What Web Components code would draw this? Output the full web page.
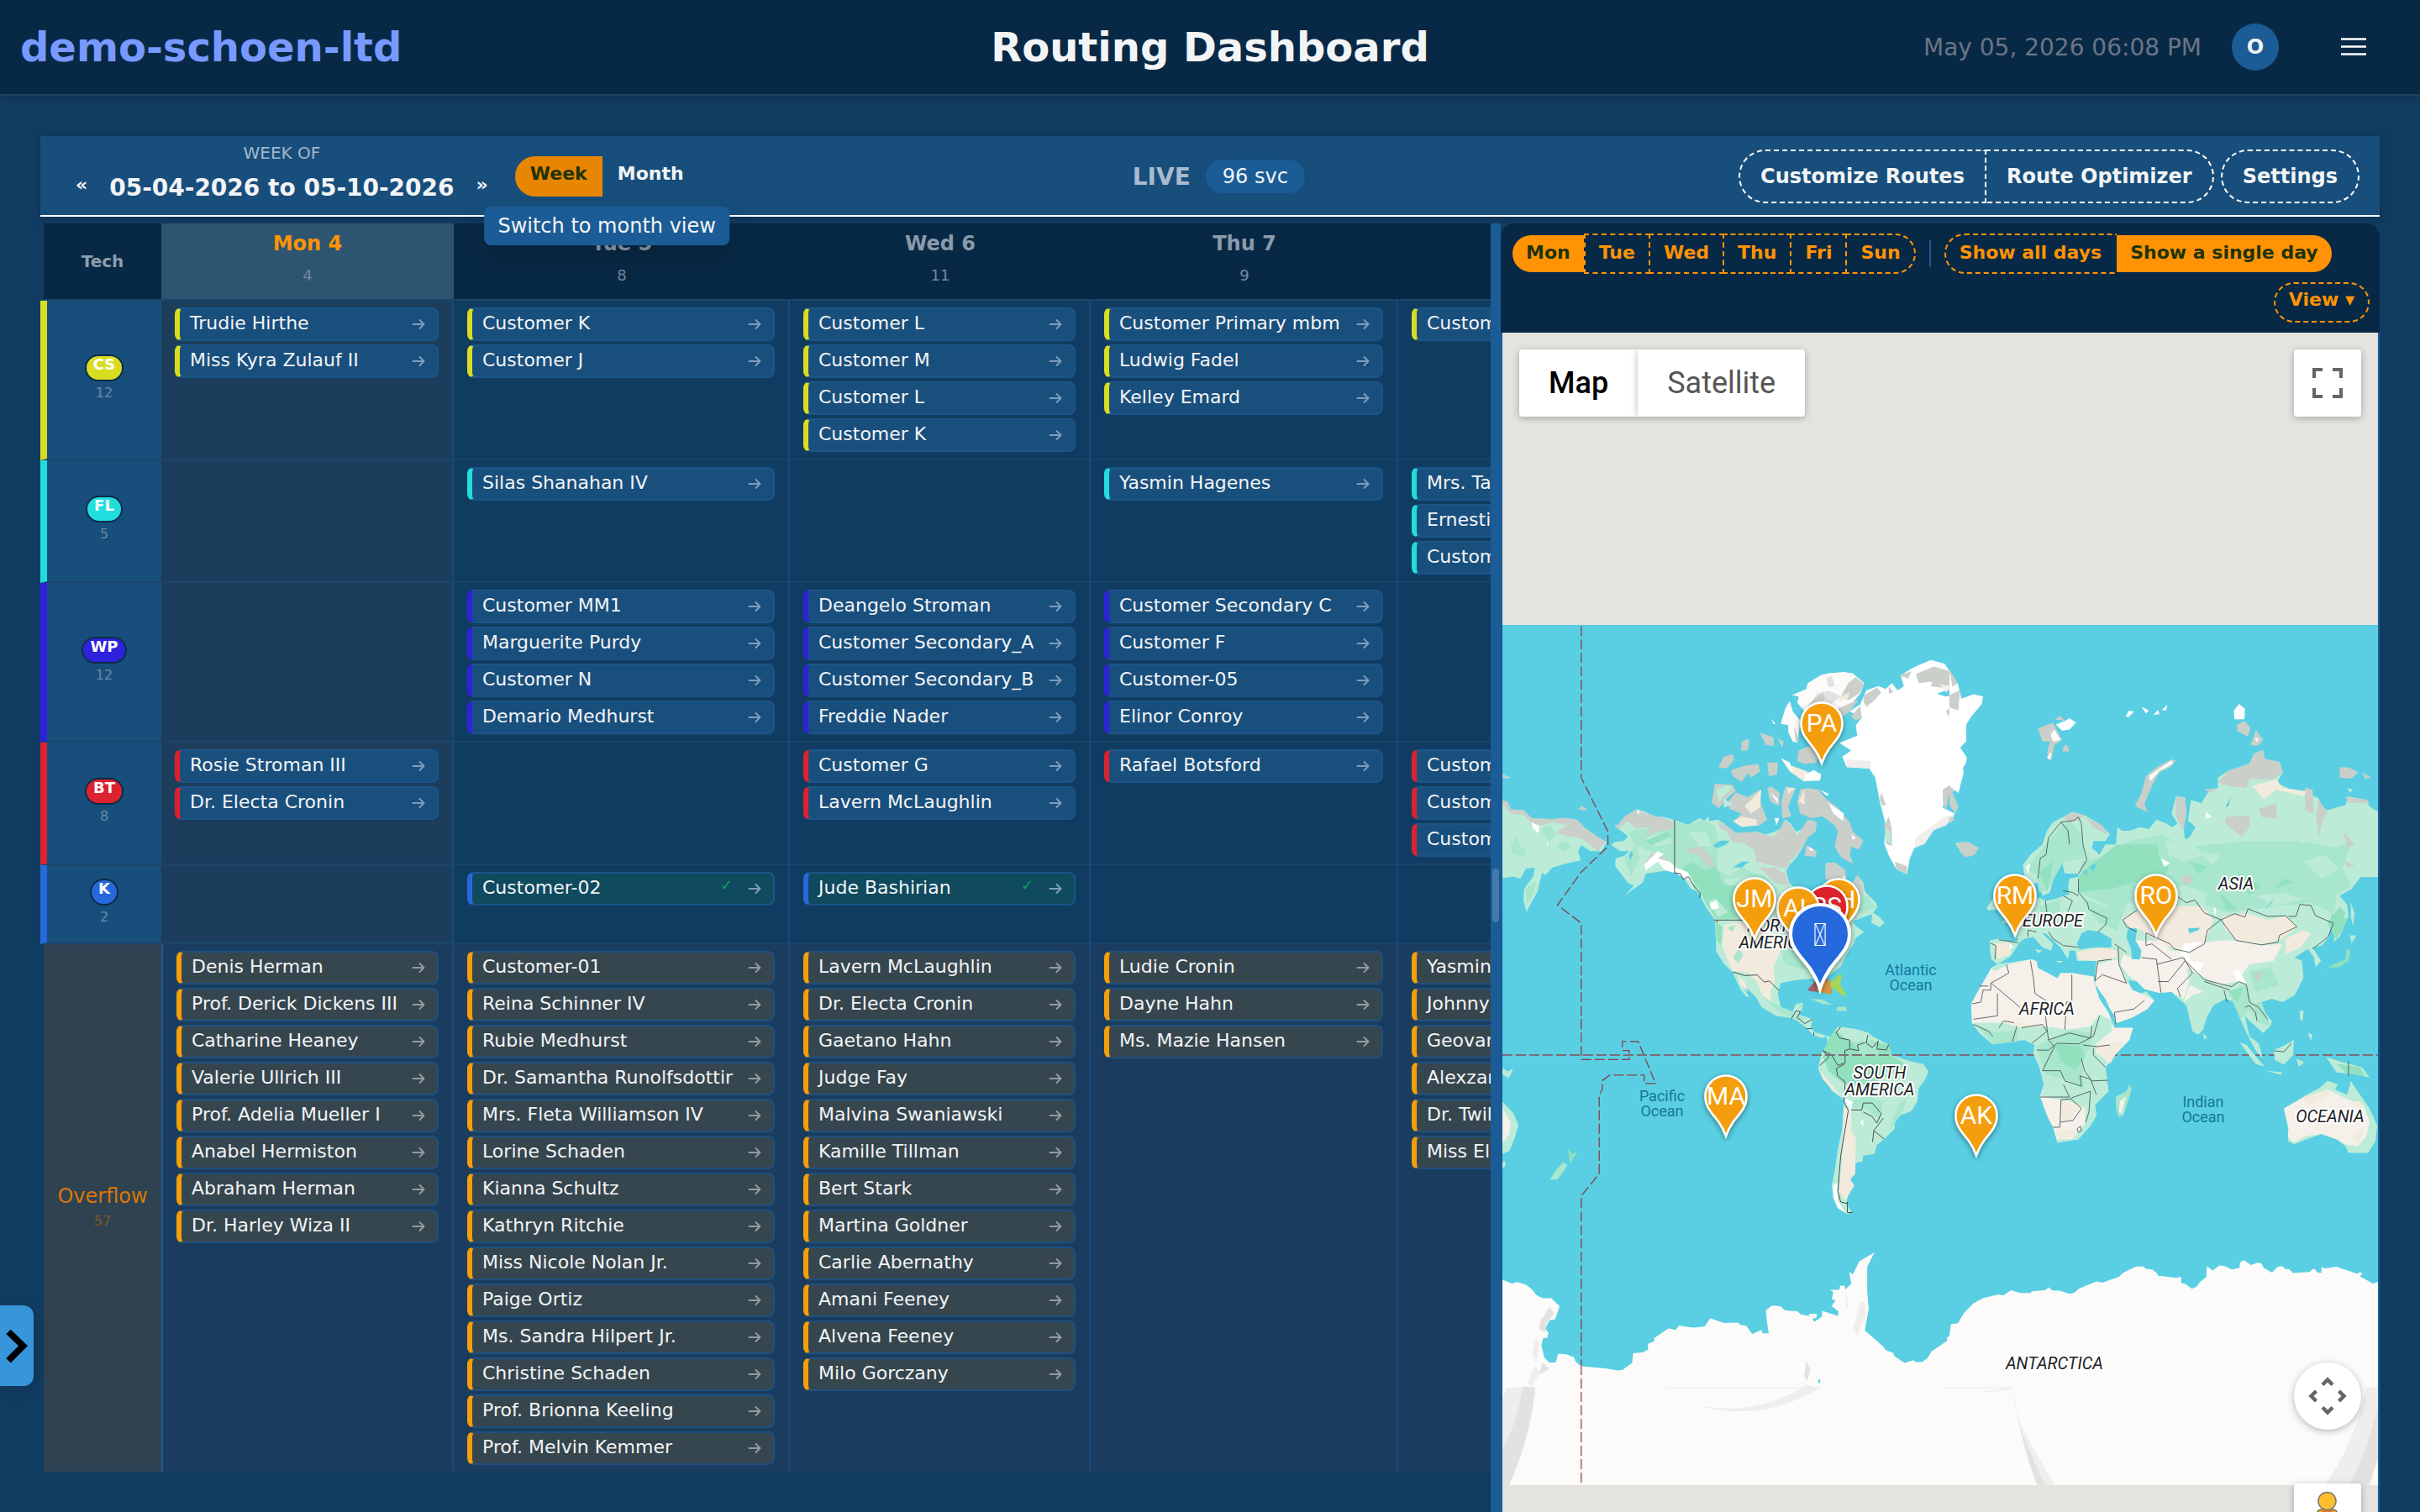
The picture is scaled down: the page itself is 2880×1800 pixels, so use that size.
<!DOCTYPE html>
<html lang="en">
<head>
<meta charset="utf-8">
<title>Routing Dashboard</title>
<style>
  html, body { margin: 0; height: 100%; }
  body {
    --ink: #f3f4f6; --deep: #082945; --base: #113c61; --panel: #184e7c; --line: #1b5c96; --accent: #ff9305;
    display: flex; flex-direction: column; overflow: hidden;
    background: var(--base); color: var(--ink);
    font-family: "DejaVu Sans", sans-serif; font-size: 22px;
  }
</style>
</head>
<body>
<app-header></app-header>
<main-view></main-view>
<drawer-toggle></drawer-toggle>

<script>
const define = (name, html, setup) => {
  const template = document.createElement('template');
  template.innerHTML = '<style>*{box-sizing:border-box} button{font:inherit;color:inherit;background:none;border:0;margin:0;padding:0;cursor:pointer}</style>' + html;
  customElements.define(name, class extends HTMLElement {
    constructor() {
      super();
      this.attachShadow({ mode: 'open' }).append(template.content.cloneNode(true));
    }
    connectedCallback() { if (setup) setup(this, this.shadowRoot); }
  });
};

/* One customer visit inside a grid cell */
define('job-chip', `
<style>
  :host {
    display: flex; align-items: center; box-sizing: border-box; height: 40px; margin-bottom: 4px; padding: 0 14px 0 12px;
    border: 2px solid #1b5589; border-left: 6px solid var(--tech); border-radius: 8px;
    background: #194f7d; color: var(--ink); font-size: 22px; white-space: nowrap;
  }
  :host([kind=done]) { background: #0f4a5f; }
  :host([kind=overflow]) { background: #36464e; border-color: #1f5080; border-left-color: #f59e0b; }
  .name { flex: 1; line-height: 30px; padding-bottom: 2px; }
  .check { display: none; color: #10a065; font-size: 18px; line-height: 24px; padding-bottom: 8px; margin-right: 18px; }
  :host([kind=done]) .check { display: block; }
  svg { flex: none; fill: none; stroke: #7f9db8; stroke-width: 2; stroke-linecap: round; stroke-linejoin: round; }
  :host([kind=overflow]) svg { stroke: #929c9f; }
</style>
<span class="name"><slot></slot></span><span class="check">✓</span><svg width="16" height="14"><path d="M1.500 7H14.500M9.500 2L14.500 7 9.500 12"/></svg>`);

/* Technician initials with the number of visits under them */
define('tech-badge', `
<style>
  :host { display: flex; flex-direction: column; align-items: center; gap: 4px; font-weight: 400; }
  .pill {
    height: 32px; padding: 0 8px; border: 2px solid #0b2c47; border-radius: 16px; background: var(--tech);
    color: #fff; font-weight: 700; font-size: 18px; line-height: 20px;
  }
  .count { font-size: 16px; line-height: 20px; padding-bottom: 4px; color: #6d8ba6; }
</style>
<span class="pill"><slot></slot></span><span class="count"><slot name="count"></slot></span>`);

define('app-header', `
<style>
  :host {
    display: grid; grid-template-columns: 1fr auto 1fr; align-items: center; height: 114px; flex: none; box-sizing: border-box;
    padding: 0 64px 0 24px; background: var(--deep); border-bottom: 2px solid #22415a; box-shadow: 0 2px 8px rgba(0,0,0,.18);
  }
  a { color: #7899ff; font-size: 48px; line-height: 56px; font-weight: 700; text-decoration: none; }
  h1 { margin: 0 -20px 0 20px; font-size: 48px; line-height: 56px; }
  .right { display: flex; justify-content: flex-end; align-items: center; }
  time { color: #6b7585; font-size: 28px; }
  .avatar { width: 56px; height: 56px; margin: 0 74px 0 36px; border-radius: 50%; background: var(--line); font-weight: 700; font-size: 24px; }
  .menu { display: flex; }
</style>
<a href="#">demo-schoen-ltd</a>
<h1>Routing Dashboard</h1>
<div class="right">
  <time>May 05, 2026 06:08 PM</time>
  <button class="avatar">O</button>
  <button class="menu" aria-label="Menu"><svg width="30" height="22"><path d="M0 1.5h30M0 10.5h30M0 19.5h30" stroke="#fff" stroke-width="2.6"/></svg></button>
</div>`);

define('week-toolbar', `
<style>
  :host {
    display: flex; justify-content: space-between; align-items: center; height: 96px; flex: none; box-sizing: border-box; padding: 2px 24px 0;
    background: var(--panel); border-bottom: 2px solid #fff; box-shadow: 0 2px 10px rgba(0,0,0,.2);
    position: relative; z-index: 2;
  }
  .week, .range, .switch, .live, .actions, .group { display: flex; align-items: center; }
  .week { gap: 14px; }
  .picker { display: flex; flex-direction: column; gap: 2px; }
  .label { text-align: center; font-size: 20px; line-height: 24px; color: #a3b8cb; }
  .range { gap: 8px; height: 54px; font-size: 28px; font-weight: 700; }
  .range button { padding: 0 18px 8px; font-size: 22px; }
  .switch { position: relative; font-weight: 700; }
  .switch button { height: 48px; padding: 0 18px 8px; }
  .switch button.on { background: #e88501; color: #1f3305; border-radius: 24px 0 0 24px; }
  .tip {
    position: absolute; left: 50%; top: 60px; transform: translateX(-50%); padding: 0 16px; border-radius: 8px;
    background: var(--line); font-size: 24px; line-height: 46px; font-weight: 400; white-space: nowrap; box-shadow: 0 16px 32px rgba(0,0,0,.16);
  }
  .live { gap: 18px; font-size: 28px; font-weight: 700; color: #a9bccd; }
  .svc { padding: 0 20px; border-radius: 20px; background: var(--line); color: var(--ink); font-size: 24px; font-weight: 400; line-height: 40px; }
  .actions { gap: 8px; font-size: 24px; font-weight: 700; }
  .actions button { height: 64px; padding: 0 24px; border: 2px dashed #fff; border-radius: 32px; }
  .actions .first { border-radius: 32px 0 0 32px; border-right: 0; }
  .actions .last { border-radius: 0 32px 32px 0; }
</style>
<div class="week">
  <div class="picker">
    <div class="label">WEEK OF</div>
    <div class="range"><button aria-label="Previous week">«</button><span>05-04-2026 to 05-10-2026</span><button aria-label="Next week">»</button></div>
  </div>
  <div class="switch"><button class="on">Week</button><button>Month</button><div class="tip" role="tooltip">Switch to month view</div></div>
</div>
<div class="live"><span>LIVE</span><span class="svc">96 svc</span></div>
<div class="actions">
  <div class="group"><button class="first">Customize Routes</button><button class="last">Route Optimizer</button></div>
  <button>Settings</button>
</div>`);

const days = [['Mon 4', 4], ['Tue 5', 8], ['Wed 6', 11], ['Thu 7', 9], ['Fri 8', 7]];
const rows = [
  ['CS', 12, '#d9dd22', [['Trudie Hirthe', 'Miss Kyra Zulauf II'], ['Customer K', 'Customer J'], ['Customer L', 'Customer M', 'Customer L', 'Customer K'], ['Customer Primary mbm', 'Ludwig Fadel', 'Kelley Emard'], ['Customer']]],
  ['FL', 5, '#22dddd', [[], ['Silas Shanahan IV'], [], ['Yasmin Hagenes'], ['Mrs. Tabitha', 'Ernestine', 'Customer']]],
  ['WP', 12, '#2f22dd', [[], ['Customer MM1', 'Marguerite Purdy', 'Customer N', 'Demario Medhurst'], ['Deangelo Stroman', 'Customer Secondary_A', 'Customer Secondary_B', 'Freddie Nader'], ['Customer Secondary C', 'Customer F', 'Customer-05', 'Elinor Conroy'], []]],
  ['BT', 8, '#dd222f', [['Rosie Stroman III', 'Dr. Electa Cronin'], [], ['Customer G', 'Lavern McLaughlin'], ['Rafael Botsford'], ['Customer', 'Customer', 'Customer']]],
  ['K', 2, '#2569dd', [[], ['Customer-02'], ['Jude Bashirian'], [], []]],
  ['Overflow', 57, '', [
    ['Denis Herman', 'Prof. Derick Dickens III', 'Catharine Heaney', 'Valerie Ullrich III', 'Prof. Adelia Mueller I', 'Anabel Hermiston', 'Abraham Herman', 'Dr. Harley Wiza II'],
    ['Customer-01', 'Reina Schinner IV', 'Rubie Medhurst', 'Dr. Samantha Runolfsdottir', 'Mrs. Fleta Williamson IV', 'Lorine Schaden', 'Kianna Schultz', 'Kathryn Ritchie', 'Miss Nicole Nolan Jr.', 'Paige Ortiz', 'Ms. Sandra Hilpert Jr.', 'Christine Schaden', 'Prof. Brionna Keeling', 'Prof. Melvin Kemmer'],
    ['Lavern McLaughlin', 'Dr. Electa Cronin', 'Gaetano Hahn', 'Judge Fay', 'Malvina Swaniawski', 'Kamille Tillman', 'Bert Stark', 'Martina Goldner', 'Carlie Abernathy', 'Amani Feeney', 'Alvena Feeney', 'Milo Gorczany'],
    ['Ludie Cronin', 'Dayne Hahn', 'Ms. Mazie Hansen'],
    ['Yasmin', 'Johnny', 'Geovanny', 'Alexzander', 'Dr. Twila', 'Miss Ella']]]
];

define('route-grid', `
<style>
  :host { display: block; overflow: hidden; }
  table { table-layout: fixed; width: 1976px; border-collapse: separate; border-spacing: 0; }
  th, td { padding: 0; vertical-align: top; }
  thead th { height: 92px; background: var(--deep); background-clip: padding-box; border-bottom: 2px solid #1b456b; color: #8b9bab; font-size: 24px; padding-top: 9px; line-height: 30px; }
  thead th.today { background: #2e5570; color: var(--accent); }
  thead .corner { font-size: 20px; vertical-align: middle; padding: 0; border-left: 4px solid transparent; color: #8f9eae; }
  thead small { display: block; margin-top: 11px; font-size: 18px; line-height: 24px; font-weight: 400; color: #7489a0; }
  tbody th { padding: 16px 0; vertical-align: middle; background: var(--panel); border-left: 8px solid var(--tech); border-bottom: 2px solid #1b456b; }
  td { padding: 8px 16px 4px; border-right: 2px solid #174a7a; border-bottom: 2px solid #1b456b; }
  td.today { background: #1c3e5c; border-right-color: #174a7a; }
  .over th { background: #2e4252; background-clip: padding-box; border-left: 4px solid transparent; border-right: 0; border-bottom: 0; font-weight: 400; font-size: 24px; line-height: 32px; color: #d97706; }
  .over small { display: block; font-size: 16px; line-height: 28px; color: #87551f; }
  .over td { background: #1a3d5f; border-bottom: 0; }
  .over td.today { border-left: 2px solid var(--line); }
</style>
<table>
  <colgroup><col style="width:144px"><col style="width:348px"><col style="width:400px"><col style="width:358px"><col style="width:366px"><col style="width:360px"></colgroup>
  <thead><tr><th class="corner">Tech</th></tr></thead>
  <tbody></tbody>
</table>`, (host, root) => {
  const today = i => i === 0 ? ' class="today"' : '';
  root.querySelector('thead tr').insertAdjacentHTML('beforeend', days.map(([d, n], i) => `<th${today(i)}>${d}<small>${n}</small></th>`).join(''));
  root.querySelector('tbody').innerHTML = rows.map(([tech, count, color, cells]) => {
    const over = tech === 'Overflow';
    const kind = over ? 'overflow' : tech === 'K' ? 'done' : 'job';
    const head = over ? `<th>${tech}<small>${count}</small></th>` : `<th><tech-badge>${tech}<span slot="count">${count}</span></tech-badge></th>`;
    return `<tr${over ? ' class="over"' : ''} style="--tech:${color}">${head}${cells.map((names, i) => `<td${today(i)}>${names.map(n => `<job-chip kind="${kind}">${n}</job-chip>`).join('')}</td>`).join('')}</tr>`;
  }).join('');
});

define('panel-splitter', `
<style>
  :host { display: flex; align-items: center; padding-left: 2px; box-sizing: border-box; width: 12px; flex: none; background: var(--line); }
  i { width: 8px; height: 64px; border-radius: 4px; background: #4678a9; }
</style><i></i>`);

const pin = (x, y, text, fill = '#f59e0b') =>
  `<g transform="translate(${x} ${y})"><path d="M0 -1.500C-2 -7 -4 -12 -9 -19C-17 -29 -24.500 -36 -24.500 -49A24.500 24.500 0 0 1 24.500 -49C24.500 -36 17 -29 9 -19C4 -12 2 -7 0 -1.500Z" fill="${fill}" stroke="#fff" stroke-width="2.500" filter="url(#drop)"/><text y="-38.500" font-size="30" fill="#fff" text-anchor="middle">${text}</text></g>`;
const land = (x, y, lines) => `<text class="land" text-anchor="middle">${lines.map((t, i) => `<tspan x="${x}" y="${y + i * 20}">${t}</tspan>`).join('')}</text>`;
const sea = (x, y, lines) => `<text class="sea" text-anchor="middle">${lines.map((t, i) => `<tspan x="${x}" y="${y + i * 18}">${t}</tspan>`).join('')}</text>`;

define('world-map', `
<style>
  :host { display: block; }
  svg { display: block; width: 100%; height: auto; font-family: Roboto, sans-serif; }
  .land { font-size: 20px; font-style: italic; fill: #202124; stroke: #fff; stroke-width: 4px; stroke-linejoin: round; paint-order: stroke; }
  .sea { font-size: 18px; fill: #14789a; }
  .g { fill: #bcecd8 } .m { fill: #a8e6cd } .d { fill: #91e1be } .b { fill: #f2ebdd } .s { fill: #f5f1ea }
  .r { fill: #cacfca } .w { fill: #fff } .o { fill: #5acfe3 } .q { fill: #efeeed } .t { fill: #e3e2e0 } .v { fill: #fcfbfa }
  .k { fill: none; stroke: #4a5052; stroke-width: 1; vector-effect: non-scaling-stroke; stroke-linejoin: round }
  .dash { fill: none; stroke: #7b6e78; stroke-width: 2; stroke-dasharray: 12 4; vector-effect: non-scaling-stroke }
  .line { stroke: #86404a; stroke-width: 1.300 }
</style>
<svg viewBox="1788 396 1042 1470" role="img" aria-label="World map">
<defs>
  <filter id="drop" x="-40%" y="-30%" width="180%" height="170%"><feDropShadow dx="0" dy="2" stdDeviation="3" flood-opacity=".45"/></filter>
</defs>
<rect x="1788" y="396" width="1042" height="1470" fill="#e4e3df"/>
<rect x="1788" y="744" width="1042" height="1024" class="o"/>

<!-- Americas and the Arctic -->
<g transform="translate(1780 740) scale(.357143)">
  <path class="g" d="M22 595L40 603 48 628 92 628 115 655 190 660 225 655 270 660 300 690 335 715 370 735 352 765 315 765 285 745 275 765 283 797 240 805 190 820 165 845 155 836 146 870 140 900 120 935 103 967 92 930 95 890 125 850 130 820 100 825 82 858 60 850 22 855Z"/>
  <path class="r" d="M22 595L40 600 50 625 95 630 120 655 190 658 225 654 270 660 300 690 365 735 340 765 315 745 290 725 260 718 225 712 200 703 240 680 190 668 155 680 120 672 95 645 50 640 22 605ZM275 625L285 615 304 624 295 630ZM22 508L50 520 35 524 22 518Z"/>
  <path class="m" d="M50 740L75 715 80 750 105 760 90 785 55 775ZM150 690L185 680 200 710 180 735 160 710ZM100 890L135 865 125 910 105 940ZM200 745L235 730 250 750 225 770Z"/>
  <path class="w" d="M118 668L145 682 143 705 125 690ZM170 740L175 735 174 750Z"/>
  <path class="g" d="M395 680L425 675 430 650 470 625 500 635 530 650 560 652 600 662 640 678 680 655 695 665 708 648 712 665 740 660 765 675 750 690 790 700 830 710 870 700 900 710 930 700 950 690 965 660 985 675 1000 700 1030 690 1040 660 1070 668 1065 700 1040 720 1025 750 1000 790 980 810 968 830 978 870 1000 890 1040 900 1060 930 1070 950 1090 950 1100 900 1110 870 1098 840 1100 805 1130 803 1160 825 1170 860 1190 870 1205 845 1225 870 1230 900 1265 935 1272 950 1255 975 1225 985 1190 1000 1200 1015 1228 1035 1200 1055 1190 1080 1170 1110 1150 1150 1110 1180 1060 1190 1000 1195 950 1205 940 1240 950 1285 990 1300 1000 1275 1025 1270 1020 1295 1010 1310 1055 1325 1050 1355 1065 1370 1085 1375 1103 1382 1090 1388 1060 1380 1030 1350 1000 1328 975 1320 935 1315 885 1285 870 1255 830 1215 800 1180 845 1252 835 1250 815 1225 790 1170 760 1140 735 1100 732 1010 728 990 705 960 683 920 682 905 650 890 630 860 600 838 570 830 535 835 500 840 490 870 455 895 430 915 460 880 440 870 425 850 398 815 400 790 430 780 445 765 415 765 385 745 395 735 430 730 440 715Z"/>
  <path class="m" d="M600 665L640 680 690 660 730 680 745 740 800 790 840 830 900 850 940 900 890 960 800 990 735 990 690 920 650 870 600 825 560 780 500 760 460 740 440 700 500 690ZM430 790L470 740 480 790 450 850ZM1180 920L1240 915 1265 950 1220 975 1190 960Z"/>
  <path class="g" d="M640 700L700 700 720 750 680 750ZM740 760L800 740 850 790 780 850 740 830ZM500 720L560 700 590 740 530 750ZM760 860L840 850 930 880 900 900 790 890Z"/>
  <path class="d" d="M610 835L650 800 700 830 735 815 760 880 800 880 830 900 790 960 800 990 735 990 700 940 680 890ZM735 1000L755 1020 750 1080 735 1060ZM500 730L570 700 590 715 520 745ZM800 870L870 880 860 900Z"/>
  <path class="g" d="M710 930L735 925 775 970 740 985Z"/>
  <path class="r" d="M400 685L430 650 470 625 500 640 560 655 594 668 590 690 540 700 500 715 515 685 470 690 440 665 410 690ZM740 665L770 680 800 705 870 700 925 720 950 690 960 662 985 680 1005 715 1040 660 1070 668 1065 700 1040 720 1025 750 1000 780 980 800 968 825 930 815 870 800 860 760 830 740 790 735 770 700 750 690ZM640 755L690 750 720 790 732 818 700 810 680 780 645 770ZM880 820L930 820 965 840 978 880 930 870ZM1100 805L1130 803 1165 830 1168 870 1100 862ZM1190 870L1205 845 1225 880 1225 920 1200 900ZM500 800L520 770 560 785 600 815 640 850 600 838 540 800 500 825Z"/>
  <path class="w" d="M495 810L540 765 560 775 540 790 580 800 600 820 640 835 665 880 640 860 600 838 565 830 540 800 500 830ZM712 940L735 930 745 955 720 960ZM470 632L480 628 476 645ZM1155 850L1167 850 1160 862Z"/>
  <path class="b" d="M762 1010L830 1000 870 1020 960 1050 945 1110 925 1150 930 1200 915 1235 918 1272 890 1250 870 1200 840 1170 790 1165 770 1120 755 1080ZM805 1180L830 1200 840 1235 815 1210Z"/>
  <path class="m" d="M950 1080L1080 1060 1160 1080 1150 1130 1110 1170 1020 1160 960 1140ZM880 1240L920 1270 985 1300 1040 1325 1010 1330 940 1300ZM1010 1275L1025 1272 1015 1292ZM790 1120L810 1090 825 1110 810 1140ZM770 1020L800 1010 790 1035Z"/>
  <path class="o" d="M725 745L750 730 780 730 765 745 735 755ZM790 820L820 800 845 800 820 820ZM1010 980L1050 985 1080 1010 1050 1020 1020 1005ZM452 765L458 775 448 795 444 780Z"/>
  <path class="r" d="M742 485L760 450 790 442 795 460 770 490ZM785 495L830 480 875 475 882 500 850 520 840 505 820 535 790 515ZM730 540L790 545 800 565 770 590 745 622 720 605ZM775 600L800 570 840 585 880 560 885 610 905 660 880 680 820 680 795 665 820 640 780 625ZM905 470L940 470 938 510 910 515ZM880 370L925 385 928 415 900 410ZM820 400L845 390 840 430 818 430ZM940 390L960 400 955 420ZM905 555L920 550 945 570 945 615 915 600ZM965 550L1000 555 985 590 975 620 985 650 955 655 952 600ZM1005 600L1015 560 1040 555 1075 560 1100 590 1140 620 1180 670 1190 700 1225 730 1210 760 1185 750 1180 780 1192 808 1150 785 1130 750 1140 700 1130 680 1090 650 1050 655 1015 640ZM1035 745L1070 765 1065 785 1030 780ZM1010 430L1080 400 1070 470 1030 475 1005 465Z"/>
  <path class="b" d="M790 665L820 650 870 660 870 680 820 685ZM830 615L885 560 880 620 850 640ZM980 500L950 455 985 480 1040 500 1030 535ZM970 555L998 555 975 575ZM1010 600L1028 560 1030 610Z"/>
  <path class="g" d="M735 560L770 545 790 555 760 580 745 600ZM760 590L790 610 760 620Z"/>
  <path class="w" d="M1030 510L1060 495 1085 510 1080 530 1030 532ZM950 455L980 470 990 500 970 480ZM915 570L940 590 940 605ZM1080 560L1110 575 1105 582ZM1110 605L1160 640 1158 665 1125 640ZM1185 710L1200 720 1190 728ZM930 655L945 655 935 680ZM1040 750L1060 760 1050 765Z"/>
  <path class="v" d="M988 245L1035 225 1040 205 1085 178 1110 172 1160 168 1190 172 1228 205 1215 240 1190 270 1140 300 1110 290 1030 300 1005 270 1010 250ZM965 290L980 265 990 300 1015 330 1010 370 1005 405 990 400 975 370 975 345 950 340ZM920 325L932 342 925 342Z"/>
  <path class="t" d="M1070 240L1110 230 1150 250 1110 280 1050 275ZM1100 190L1120 180 1130 215 1110 220Z"/>
  <path class="r" d="M1175 205L1200 185 1228 210 1210 240 1175 262 1150 250ZM1140 290L1210 260 1180 300 1150 320ZM1060 260L1090 235 1100 260 1040 280ZM995 350L1010 390 1000 405Z"/>
  <path class="b" d="M1140 255L1180 235 1175 255 1150 265Z"/>
  <path class="w" d="M1180 300L1215 275 1235 230 1275 215 1300 225 1320 205 1340 230 1360 215 1350 180 1380 160 1410 145 1450 128 1495 140 1520 175 1535 205 1500 230 1470 240 1500 250 1545 240 1560 280 1568 300 1568 400 1548 420 1568 450 1568 470 1550 500 1545 560 1500 560 1490 620 1530 640 1500 680 1460 690 1430 740 1395 755 1380 790 1370 843 1335 825 1310 780 1295 740 1300 680 1280 600 1265 520 1245 490 1170 485 1155 450 1185 430 1145 405 1205 380 1200 345 1220 320Z"/>
  <path class="r" d="M1400 175L1460 150 1515 165 1535 205 1510 225 1450 215 1455 200 1410 205ZM1345 180L1385 165 1375 190ZM1228 245L1270 220 1285 235 1265 260 1235 285 1225 265ZM1185 315L1215 280 1220 320 1200 330ZM1310 215L1325 235 1310 240ZM1500 300L1520 280 1545 300 1520 330ZM1490 560L1520 540 1555 500 1545 550 1510 580 1500 630 1490 600ZM1285 570L1300 610 1290 615 1280 595ZM1295 680L1310 650 1320 690 1320 750 1300 740ZM1330 800L1370 815 1370 843 1335 825Z"/>
  <path class="g" d="M1540 280L1560 270 1565 330 1545 320ZM1520 595L1530 590 1535 625 1520 620ZM1300 690L1315 700 1315 740 1300 730ZM1532 738L1568 735 1568 785 1550 770ZM1255 970L1280 985 1295 1005 1280 1018 1252 1005Z"/>
  <path class="q" d="M1400 720L1500 650 1530 645 1500 680 1460 695 1430 740 1395 755ZM1170 460L1250 465 1250 490 1170 485ZM1480 210L1530 215 1500 235Z"/>
  <path class="m" d="M1050 1258L1090 1260 1122 1278 1090 1275ZM1138 1285L1165 1285 1170 1298 1135 1298Z"/>
  <!-- South America -->
  <path class="g" d="M1103 1380L1115 1385 1140 1350 1200 1358 1240 1370 1260 1385 1310 1410 1320 1445 1380 1465 1425 1475 1442 1500 1430 1530 1410 1555 1405 1600 1385 1632 1350 1645 1330 1665 1330 1690 1300 1720 1270 1745 1262 1775 1225 1780 1222 1800 1198 1805 1198 1840 1182 1860 1195 1880 1175 1910 1168 1940 1188 1970 1170 1975 1140 1955 1125 1920 1120 1880 1130 1830 1140 1760 1155 1690 1160 1600 1155 1590 1120 1565 1095 1520 1075 1490 1085 1440 1105 1410Z"/>
  <path class="d" d="M1105 1400L1130 1360 1180 1400 1240 1400 1310 1410 1320 1445 1370 1480 1330 1500 1260 1540 1200 1545 1160 1540 1110 1500 1090 1450Z"/>
  <path class="m" d="M1190 1400L1260 1395 1280 1440 1220 1450ZM1180 1600L1240 1580 1290 1600 1280 1660 1230 1620 1190 1620ZM1340 1610L1370 1590 1360 1630 1310 1700Z"/>
  <path class="b" d="M1160 1620L1185 1625 1185 1700 1200 1720 1198 1840 1180 1860 1195 1880 1165 1930 1145 1900 1155 1780ZM1075 1490L1100 1520 1150 1580 1120 1560 1090 1525Z"/>
  <path class="w" d="M1125 1880L1138 1870 1140 1930 1165 1970 1140 1955 1125 1920ZM1165 1590L1190 1600 1185 1625 1170 1610ZM1215 1670L1225 1660 1225 1682Z"/>
  <path class="k" d="M596 660V838L615 840 625 860 642 850 665 888 682 905 680 922M728 995H740L735 1003M738 995H960M790 1168L830 1180 872 1178 895 1202 912 1198 944 1230M985 1325L1000 1298 1015 1300 1005 1320 1030 1340 1055 1325M1035 1357H1055M1060 1370V1380M1150 1350L1135 1370 1145 1388 1180 1395V1425L1163 1430 1165 1470 1140 1480 1120 1445 1090 1430 1110 1452 1080 1480M1240 1378L1235 1405 1255 1420 1275 1398 1270 1425 1302 1428 1310 1410M1180 1425L1210 1430 1205 1412 1230 1404M1163 1475L1135 1490 1140 1515 1165 1535 1160 1600 1175 1630 1165 1690 1150 1780 1140 1900 1150 1935 1172 1940M1185 1628L1220 1628 1225 1605 1255 1605 1285 1640 1270 1672 1255 1650 1225 1635M1292 1655L1260 1697 1295 1725M1260 1697L1256 1735M1172 1935V1970H1190"/>
  <path class="dash line" d="M285 15V520L374 700V750L285 835 206 945 285 1005V1460H445V1430H422V1400H475L533 1540H495V1512H380L355 1530V1560L345 1577V1840L285 1915V2480"/>
  <path class="dash" d="M22 1445H2940"/>
  <path class="g" d="M22 1488L40 1500 58 1490 50 1510 42 1523 22 1508ZM22 1600L60 1640 76 1680 60 1730 45 1765 22 1775ZM22 1800L34 1803 30 1818 22 1822Z"/>
  <path class="s" d="M22 1620L50 1670 45 1710 22 1740Z"/>
  <path class="d" d="M240 1756L255 1775 272 1768 248 1806Z"/>
  <path class="m" d="M180 1860L200 1830 225 1802 240 1812 225 1835 205 1860Z"/>
</g>

<!-- Europe, Africa, Asia and Oceania -->
<g transform="translate(2320 740) scale(.357143 .408163)">
  <path class="w" d="M0 150L28 180 40 225 80 212 112 218 108 240 70 280 50 310 35 370 60 400 40 410 48 440 30 500 0 480Z"/>
  <path class="r" d="M0 140L28 180 10 190ZM0 215L35 200 30 260 0 250ZM0 480L30 540 20 560 0 535ZM0 570L20 575 0 590ZM25 645L60 642 98 660 85 680 55 688 35 670ZM295 312L345 295 375 345 350 360 340 405 325 385 335 350 310 350ZM350 285L370 275 385 290ZM377 370L390 358 400 378 380 380ZM618 538L640 500 655 450 690 425 740 402 755 405 735 425 700 440 680 470 665 500 650 530 660 556ZM958 300L985 290 1003 310 995 335 960 320ZM1022 316L1046 345 1028 362 1003 360ZM1300 425L1330 425 1362 440 1340 458 1302 455ZM1375 440L1406 455 1385 458Z"/>
  <path class="w" d="M355 300L385 290 400 282 422 295 400 315 375 318ZM338 330L350 315 370 345 345 350ZM588 275L598 260 615 263 595 280ZM640 248L665 260 655 268ZM680 272L695 258 700 270ZM708 258L726 243 722 260ZM665 285L675 272ZM948 260L965 240 985 255 983 285 950 285ZM665 450L740 405 745 415 700 435 670 465ZM1018 340L1030 340 1025 352ZM325 395L340 380 335 405Z"/>
  <path class="g" d="M135 930L165 925 205 935 230 930 200 880 172 878 190 870 215 860 240 835 270 820 300 805 320 815 350 810 380 800 400 795 395 775 400 750 430 745 430 735 385 735 375 700 405 670 390 650 370 670 345 700 350 740 335 790 310 800 300 760 275 765 250 745 245 710 270 680 310 650 325 610 345 585 380 570 410 555 450 565 500 590 535 620 520 640 480 640 475 660 500 680 520 650 555 650 560 600 575 610 600 610 635 600 665 605 690 578 725 590 740 600 760 590 740 560 755 510 785 512 790 560 780 600 785 635 800 630 820 600 795 580 805 520 840 530 860 500 895 485 895 455 930 435 1000 415 1015 385 1045 375 1050 400 1100 410 1112 440 1090 470 1140 490 1190 500 1230 515 1240 540 1260 550 1320 535 1330 510 1390 520 1400 540 1428 555V745L1370 745 1340 780 1300 800 1325 825 1330 860 1300 920 1280 935 1290 880 1275 850 1265 920 1240 945 1210 950 1238 990 1220 1008 1215 980 1195 955 1150 980 1175 990 1180 1040 1150 1090 1110 1110 1075 1100 1040 1110 1050 1140 1075 1165 1070 1180 1045 1200 1020 1180 1000 1165 985 1150 1000 1210 1030 1230 1045 1275 1020 1250 990 1200 965 1150 950 1110 920 1100 880 1120 860 1150 845 1190 830 1205 810 1195 790 1120 770 1105 740 1080 700 1083 650 1072 625 1050 595 1045 610 1075 640 1085 655 1078 683 1105 660 1130 610 1155 555 1172 550 1150 520 1100 485 1060 495 1040 485 1030 490 990 425 990 420 960 460 952 540 950 540 925 500 905 460 900 440 910 425 940 435 960 400 960 395 985 370 950 340 925 320 910 310 910 345 940 340 960 310 950 280 920 250 925 235 935 205 975 180 990 160 1000 140 985 135 960Z"/>
  <path class="m" d="M710 620L780 660 860 650 1000 640 1180 640 1290 660 1340 640 1310 720 1340 770 1290 800 1280 850 1200 820 1100 830 1000 840 930 850 860 830 800 800 700 800 600 820 560 840 430 790 440 700 500 690 600 640ZM255 720L320 650 370 600 400 580 440 620 450 690 380 700 330 780 300 790 290 740ZM440 810L520 830 590 820 560 900 500 880ZM1000 1020L1070 1010 1100 1060 1020 1080ZM930 1080L990 1060 1010 1120 970 1160ZM990 1120L1040 1110 1070 1180 1030 1170ZM300 830L370 810 360 900 310 880Z"/>
  <path class="d" d="M500 690L560 650 690 650 700 690 730 720 690 770 620 760 540 780 470 785 430 790 430 740ZM960 730L1040 770 1000 800ZM900 790L960 840 920 840ZM1260 880L1300 830 1320 850 1290 930ZM800 700L860 715 830 735ZM1080 780L1120 750 1150 760ZM930 1080L980 1065 960 1110ZM1310 870L1330 860 1310 900 1285 930ZM300 730L345 700 325 790Z"/>
  <path class="g" d="M980 560L1080 580 1060 640 960 640ZM1180 700L1250 680 1300 720 1240 750ZM820 670L900 680 880 710ZM1120 610L1200 600 1180 650ZM700 800L780 770 860 790 850 830 740 830ZM720 640L800 640 850 680 780 700 730 680ZM1020 800L1110 790 1180 810 1080 830Z"/>
  <path class="r" d="M895 470L930 435 1000 415 1015 385 1045 375 1050 400 1100 410 1112 440 1080 460 1000 460 990 485 930 480ZM755 512L785 512 790 560 780 610 755 570ZM920 570L1000 565 1000 600 975 630 920 590ZM1030 545L1090 530 1090 575 1040 570ZM1230 520L1260 555 1245 580 1230 630 1222 570ZM1185 485L1210 490 1215 560 1185 550ZM1320 510L1390 520 1400 530 1330 530ZM1310 610L1350 650 1330 660ZM380 570L410 555 450 565 430 580 400 585ZM450 570L510 595 530 625 480 600ZM770 745L800 740 810 760 780 768ZM850 490L895 485 870 500ZM1310 695L1350 710 1330 720ZM1015 1030L1045 1020 1030 1055Z"/>
  <path class="b" d="M1010 480L1090 460 1110 485 1190 495 1180 510 1090 490 1050 518ZM575 865L625 845 650 860 760 830 840 830 880 870 850 940 770 960 700 940 640 900 600 890ZM910 860L990 850 1060 870 1120 860 1160 890 1100 930 1040 942 960 930 920 900ZM1120 925L1180 900 1205 910 1170 950 1120 970ZM425 965L500 950 560 960 560 980 490 990 430 985ZM150 940L200 935 205 970 160 985Z"/>
  <path class="s" d="M620 930L700 930 740 960 780 960 830 940 900 930 960 930 1040 945 1110 940 1080 990 1000 1000 960 1050 900 1060 830 1030 790 1010 800 1050 780 1100 740 1080 700 1083 650 1072 625 1050 595 1030 570 1000 580 970 620 985ZM490 1000L560 985 590 1050 610 1075 640 1085 683 1105 660 1130 610 1155 555 1172 520 1100 485 1060ZM800 1060L845 1080 810 1090 780 1110Z"/>
  <path class="w" d="M780 940L840 935 800 960 800 990 850 995 830 1030 790 990 770 970ZM945 1020L965 1015 990 1055 960 1050ZM705 690L735 705 715 715ZM880 830L890 840 885 860ZM855 555L875 570 855 575ZM255 715L270 705 262 735ZM200 940L212 945 200 960Z"/>
  <path class="o" d="M595 895L625 895 620 930 640 960 635 985 608 985 605 955 590 920ZM795 895L835 893 830 900 800 910ZM480 1062L492 1065 520 1110 550 1150 552 1172 540 1170 500 1110ZM1050 840L1080 810 1075 820ZM920 540L938 512 930 540ZM465 715L490 705 480 730ZM445 730L460 725 455 740Z"/>
  <path class="g" d="M125 835L140 815 150 800 160 840 128 842ZM285 955L310 960 295 968ZM352 990L378 990 370 996ZM1338 820L1350 850 1345 890 1338 860ZM1335 915L1357 915 1340 938ZM1325 485L1345 490 1335 498ZM1168 1135L1180 1135 1178 1165 1168 1160ZM1195 1200L1210 1205 1205 1222ZM845 1200L858 1212 850 1220ZM968 1228L990 1235 1050 1298 1020 1290ZM1052 1310L1110 1315 1105 1322ZM1080 1250L1120 1235 1148 1220 1145 1265 1115 1292 1085 1280ZM1155 1275L1183 1285 1165 1298ZM1255 1270L1310 1285 1375 1300 1400 1330 1350 1320 1290 1315ZM1390 1303L1412 1300ZM1362 1465L1385 1465 1388 1480 1370 1492ZM1220 595L1230 590 1230 602Z"/>
  <path class="d" d="M1242 1018L1280 1000 1320 985 1325 955 1337 960 1330 990 1300 1008 1260 1010ZM1290 1290L1370 1300 1385 1325 1320 1315Z"/>
  <path class="s" d="M160 1000L205 995 275 985 290 990 295 1010 360 1040 370 1025 410 1025 480 1035 485 1060 500 1100 530 1140 550 1185 612 1185 600 1220 545 1270 520 1300 530 1370 485 1410 490 1440 470 1470 430 1510 360 1520 345 1475 325 1440 302 1385 315 1350 300 1300 280 1260 285 1235 250 1220 200 1225 145 1233 100 1200 75 1170 72 1115 100 1070 140 1010Z"/>
  <path class="g" d="M140 1010L160 1000 275 985 200 1000 150 1020ZM80 1170L180 1170 240 1185 310 1180 400 1190 470 1180 500 1145 545 1165 540 1195 490 1230 490 1260 530 1270 520 1300 530 1370 485 1410 490 1440 470 1470 430 1510 360 1520 360 1510 410 1510 450 1465 455 1420 400 1400 305 1385 315 1350 300 1300 280 1260 285 1235 250 1220 200 1225 145 1233 100 1200Z"/>
  <path class="m" d="M85 1170L150 1200 230 1190 225 1225 145 1233ZM290 1240L400 1190 470 1200 470 1240 440 1290 450 1370 400 1340 320 1320Z"/>
  <path class="d" d="M350 1230L440 1240 450 1270 420 1310 370 1280Z"/>
  <path class="b" d="M180 1160L260 1175 320 1180 240 1185ZM490 1235L580 1225 535 1290 500 1265ZM370 1395L435 1415 400 1455 370 1450ZM355 1490L430 1480 410 1505 360 1505Z"/>
  <path class="m" d="M555 1385L590 1370 600 1350 607 1365 580 1440 565 1445 555 1420Z"/><path class="s" d="M568 1400L588 1385 575 1435 565 1430Z"/>
  <path class="g" d="M1115 1420L1190 1380 1235 1360 1260 1340 1295 1350 1285 1365 1325 1380 1338 1340 1360 1370 1400 1420 1426 1470 1420 1515 1395 1550 1330 1550 1320 1530 1290 1510 1240 1495 1190 1510 1150 1525 1128 1515 1130 1480Z"/>
  <path class="s" d="M1115 1420L1190 1385 1260 1365 1330 1395 1380 1410 1400 1460 1390 1500 1360 1530 1320 1525 1290 1510 1240 1495 1190 1500 1145 1520 1128 1500 1130 1480Z"/>
  <path class="b" d="M1180 1390L1260 1365 1270 1380 1200 1410ZM1340 1400L1370 1400 1380 1430ZM1340 1500L1380 1480 1370 1530Z"/>
  <path class="k" d="M295 750L303 690 322 680 330 630 372 585 395 610 400 650M372 585L415 580 430 570 440 590 445 650 458 695 430 735M378 785L410 790 430 800M430 750V790L460 820 465 840 525 865 520 885 495 905M320 815L325 850 300 880M380 800L410 815 395 845M578 870L625 842M578 870L590 890 625 905M762 803L790 820 818 812 850 850 905 870 860 900 850 940 800 965 750 955 735 940 655 908 655 945 675 940 740 985M905 870L950 852 985 862 995 838 1060 860 1120 858 1158 890 1100 915 1095 935 1040 943 955 930 930 900 905 870M1130 860L1155 860 1168 825 1205 828 1220 858 1280 880 1262 920 1210 955M430 950L380 945 345 925 330 905M262 920V900L290 905M165 928L230 937M137 938L155 945 152 985M550 940L590 965M562 950L565 1000 590 1055 510 1030 485 1048 495 990 540 985M640 980L690 985 700 1050 705 1082M690 1000L780 980 810 1025 760 1070 770 1095M780 985L810 1010 850 1045 940 1065 965 1050 990 1060 1000 1110 1030 1125 1060 1160M850 1050L935 1075M915 1075L925 1110M695 1050L730 1050 785 990M985 1125L1000 1120 1020 1140 1025 1165M100 1063H130M75 1115L105 1110 112 1075 138 1075V1055L198 1025 190 1000M140 1055L235 1125M160 1085V1150L80 1160M270 990L280 1040 285 1085 330 1110M408 1030V1105L390 1110 385 1190M555 1175L550 1140 615 1130 650 1105M80 1175L130 1195 145 1210M165 1185L180 1165 215 1170M210 1225L225 1180M240 1185L310 1175 325 1195 275 1230M320 1150L330 1220 400 1200 470 1215 475 1180M290 1250H330L360 1230 430 1232 480 1210 500 1150M330 1220L350 1240 310 1310 370 1310 385 1340 440 1355 435 1325 470 1335 490 1380M445 1235L490 1240 535 1235M480 1245V1265L520 1300M440 1275L450 1310 475 1340 528 1338M302 1387H400L380 1350M345 1475H368L372 1395 405 1392 440 1420 412 1455 370 1460M405 1390L470 1370 465 1430 455 1460M425 1480L437 1472 440 1485 430 1490ZM1080 1252L1115 1255 1140 1230M1330 1282V1325" opacity=".85"/>
</g>

<!-- Antarctica, western part -->
<g transform="translate(1780 1280) scale(.357143 .333333)">
  <path class="v" d="M22 730L55 745 70 738 100 748 118 762 135 785 155 797 185 797 213 825 198 872 180 875 165 905 176 920 172 938 158 940 152 965 162 1008 178 1026 200 1026 208 995 235 997 262 1008 265 1022 285 1040 370 1048 405 1055 422 1053 455 1028 458 993 490 990 508 980 507 960 530 950 527 940 575 905 600 910 610 895 660 902 697 897 715 868 760 885 808 884 815 892 835 895 855 925 885 910 890 922 910 922 905 890 900 840 920 823 948 825 965 840 1005 843 1018 855 1045 860 1045 852 1070 853 1070 865 1055 872 1062 881 1088 862 1088 842 1140 860 1143 845 1120 825 1132 805 1120 800 1125 775 1115 767 1145 767 1148 752 1162 752 1165 765 1185 745 1178 702 1190 712 1212 665 1262 633 1238 685 1238 770 1243 835 1230 912 1290 968 1300 983 1325 992 1328 1003 1362 1028 1393 1018 1398 1025 1420 1025 1440 1010 1452 987 1505 948 1503 937 1518 930 1517 893 1540 887 1555 870 1568 845 1640 800V1464H22Z"/>
  <path class="q" d="M35 1117L132 1112 130 1130 22 1340V1160ZM585 1140C690 1205 880 1220 1035 1105L1080 1118C900 1235 720 1215 585 1140ZM1215 812L1230 810 1233 860 1205 930 1190 905ZM1165 770L1175 825 1168 835ZM135 935L145 960 135 1030 122 990ZM105 1100L130 1040 150 1060 120 1110Z"/>
  <path class="t" d="M92 1112L132 1118C120 1250 85 1370 45 1464H22V1335C60 1270 75 1190 92 1112ZM180 828L195 850 168 890 165 918 145 910 148 880ZM1035 1018L1048 1050 1040 1092 1028 1075ZM155 1025L178 1050 145 1068Z"/>
  <path d="M570 1117H1080M1490 1117H1700" stroke="#ebeae9" stroke-width="3"/>
  <path class="o" d="M1072 1093L1081 1085V1103Z"/><path class="dash" d="M285 1035V1460" style="stroke:#b98082"/>
</g>
<!-- Antarctica, eastern part -->
<g transform="translate(2320 1280) scale(.357143 .333333)">
  <path class="v" d="M0 930L5 890 28 887 50 848 80 815 115 795 165 783 180 787 205 768 235 778 270 778 275 772 318 768 332 758 342 769 368 770 402 782 418 776 432 762 490 737 510 741 565 720 580 705 620 684 645 683 655 692 675 694 693 708 694 716 755 724 772 720 772 743 785 745 808 763 825 755 835 738 856 722 858 682 877 698 900 680 920 683 940 694 967 689 968 670 980 660 1005 678 1028 669 1040 673 1048 689 1075 705 1093 685 1110 682 1118 692 1132 693 1145 707 1200 703 1215 690 1228 706 1240 706 1240 685 1252 690 1290 684 1360 710 1368 703 1377 710 1367 718 1412 745 1428 738V1464H0Z"/>
  <path class="q" d="M210 1128C225 1250 290 1350 352 1464H320C270 1380 240 1260 210 1128ZM1390 1117L1428 1112V1190C1420 1280 1370 1400 1335 1464H1250C1320 1370 1370 1220 1390 1117Z"/>
  <path class="t" d="M210 1128C225 1250 270 1350 320 1464H292C255 1360 230 1250 210 1128ZM1428 1185V1370L1400 1464H1332C1370 1390 1400 1300 1428 1185Z"/>
  <path d="M0 1117H207L160 1127 105 1133" fill="none" stroke="#ebeae9" stroke-width="3"/>
</g>

${land(2111, 1109, ['NORTH', 'AMERICA'])}${land(2237, 1284, ['SOUTH', 'AMERICA'])}${land(2436, 1208, ['AFRICA'])}${land(2443, 1103, ['EUROPE'])}${land(2661, 1059, ['ASIA'])}${land(2773, 1336, ['OCEANIA'])}${land(2445, 1630, ['ANTARCTICA'])}
${sea(2274, 1161, ['Atlantic', 'Ocean'])}${sea(1978, 1311, ['Pacific', 'Ocean'])}${sea(2622, 1318, ['Indian', 'Ocean'])}

<g stroke-linejoin="round" stroke-width="4">
  <path d="M2190 1162L2178 1172 2195 1184 2188 1172Z" fill="#a4d65e" stroke="#a4d65e"/>
  <path d="M2170 1160L2154 1178 2178 1180Z" fill="#a06070" stroke="#a06070"/><path d="M2164 1178L2176 1168 2178 1182Z" fill="#d9953f" stroke="#d9953f"/>
</g>
${pin(2168, 910, 'PA')}${pin(2188, 1120, 'CH')}${pin(2174, 1128, 'RS', '#dd222f')}${pin(2140, 1130, 'AL')}${pin(2088, 1119, 'JM')}${pin(2054, 1354, 'MA')}${pin(2352, 1377, 'AK')}${pin(2398, 1115, 'RM')}${pin(2566, 1115, 'RO')}
<g transform="translate(2166 1179)"><path d="M0 -2C-2 -9 -5 -15 -12 -26C-22 -40 -35 -50 -35 -67A35 35 0 0 1 35 -67C35 -50 22 -40 12 -26C5 -15 2 -9 0 -2Z" fill="#2569dd" stroke="#fff" stroke-width="4" filter="url(#drop)"/><text y="-53" font-size="38" fill="#fff" text-anchor="middle">&#xf015;</text></g>
</svg>`);

define('map-panel', `
<style>
  :host { display: flex; flex-direction: column; flex: 1; min-width: 0; background: var(--base); }
  .bar { display: flex; flex-wrap: wrap; justify-content: flex-start; align-items: center; gap: 10px 16px; padding: 12px; background: var(--deep); border-radius: 16px 16px 0 0; color: var(--accent); font-weight: 700; }
  .group { display: flex; }
  .bar button { height: 48px; padding: 0 16px 3px; border: 2px dashed var(--accent); background-clip: padding-box; }
  .group button + button { margin-left: -2px; }
  .bar .on { background: var(--accent); background-clip: padding-box; color: #1f3305; border-color: transparent; }
  .group button:first-child { border-radius: 24px 0 0 24px; }
  .group button:last-child { border-radius: 0 24px 24px 0; }
  .group button:not(.on):has(+ .on) { border-right: 0; padding-right: 18px; }
  .bar .view { margin-left: auto; border-radius: 24px; padding-bottom: 8px; }
  .sep { width: 2px; height: 32px; background: var(--line); }
  .map { position: relative; flex: 1; min-height: 0; overflow: hidden; border: solid var(--line); border-width: 0 2px; font-family: Roboto, sans-serif; }
  .map button { background: #fff; box-shadow: 0 2px 8px rgba(0,0,0,.28); color: #666; }
  .types { position: absolute; left: 20px; top: 20px; display: flex; font-size: 36px; }
  .types button { height: 80px; padding: 0 35px; color: #565656; border-radius: 0 4px 4px 0; }
  .types .sel { color: #000; font-weight: 500; border-radius: 4px 0 0 4px; }
  .full, .cam, .peg { position: absolute; right: 20px; width: 80px; height: 80px; border-radius: 4px; display: grid; place-items: center; }
  .full { top: 20px; }
  .cam { bottom: 164px; border-radius: 50% !important; }
  .peg { bottom: 20px; }
</style>
<div class="bar">
  <div class="group"><button class="on">Mon</button><button>Tue</button><button>Wed</button><button>Thu</button><button>Fri</button><button>Sun</button></div>
  <span class="sep"></span>
  <div class="group"><button>Show all days</button><button class="on">Show a single day</button></div>
  <button class="view">View ▾</button>
</div>
<div class="map">
  <world-map></world-map>
  <div class="types"><button class="sel">Map</button><button>Satellite</button></div>
  <button class="full" aria-label="Full screen"><svg width="36" height="36" viewBox="0 0 36 36"><path d="M2 12V2H12M24 2H34V12M34 24V34H24M12 34H2V24" fill="none" stroke="#666" stroke-width="4"/></svg></button>
  <button class="cam" aria-label="Map camera controls"><svg width="48" height="48" viewBox="0 0 48 48"><path d="M18 10.500L24 4.500 30 10.500M18 37.500L24 43.500 30 37.500M10.500 18L4.500 24 10.500 30M37.500 18L43.500 24 37.500 30" fill="none" stroke="#666" stroke-width="4.500"/></svg></button>
  <button class="peg" aria-label="Street View"><svg width="40" height="64" viewBox="0 0 40 64"><path d="M8 27Q8 23 14 23H25Q31 23 31 27L33 44 28 47V62H11V47L6 44Z" fill="#fbb41f" stroke="#666" stroke-width="1.500"/><path d="M12 23H27L24 28H15Z" fill="#e0782c"/><circle cx="19.500" cy="13" r="10.500" fill="#fdbf2d" stroke="#777" stroke-width="1.500"/></svg></button>
</div>`);

define('main-view', `
<style>
  :host { display: flex; flex-direction: column; padding: 48px 48px 0; }
  .board { display: flex; margin-top: 8px; height: calc(100vh - 200px); flex: none; }
  route-grid { flex: 0 0 62%; }
</style>
<week-toolbar></week-toolbar>
<div class="board"><route-grid></route-grid><panel-splitter></panel-splitter><map-panel></map-panel></div>`);

define('drawer-toggle', `
<style>
  :host { position: fixed; left: 0; bottom: 150px; z-index: 5; }
  button { display: block; width: 40px; height: 96px; background: #3795da; border-radius: 0 12px 12px 0; box-shadow: 4px 4px 16px rgba(0,0,0,.12); }
  svg { display: block; }
</style>
<button aria-label="Open drawer"><svg width="40" height="96"><path d="M12.700 28.700L33 48.300 12.700 68.500 7.300 63 22 48.300 7.300 34Z"/></svg></button>`);
</script>
</body>
</html>
